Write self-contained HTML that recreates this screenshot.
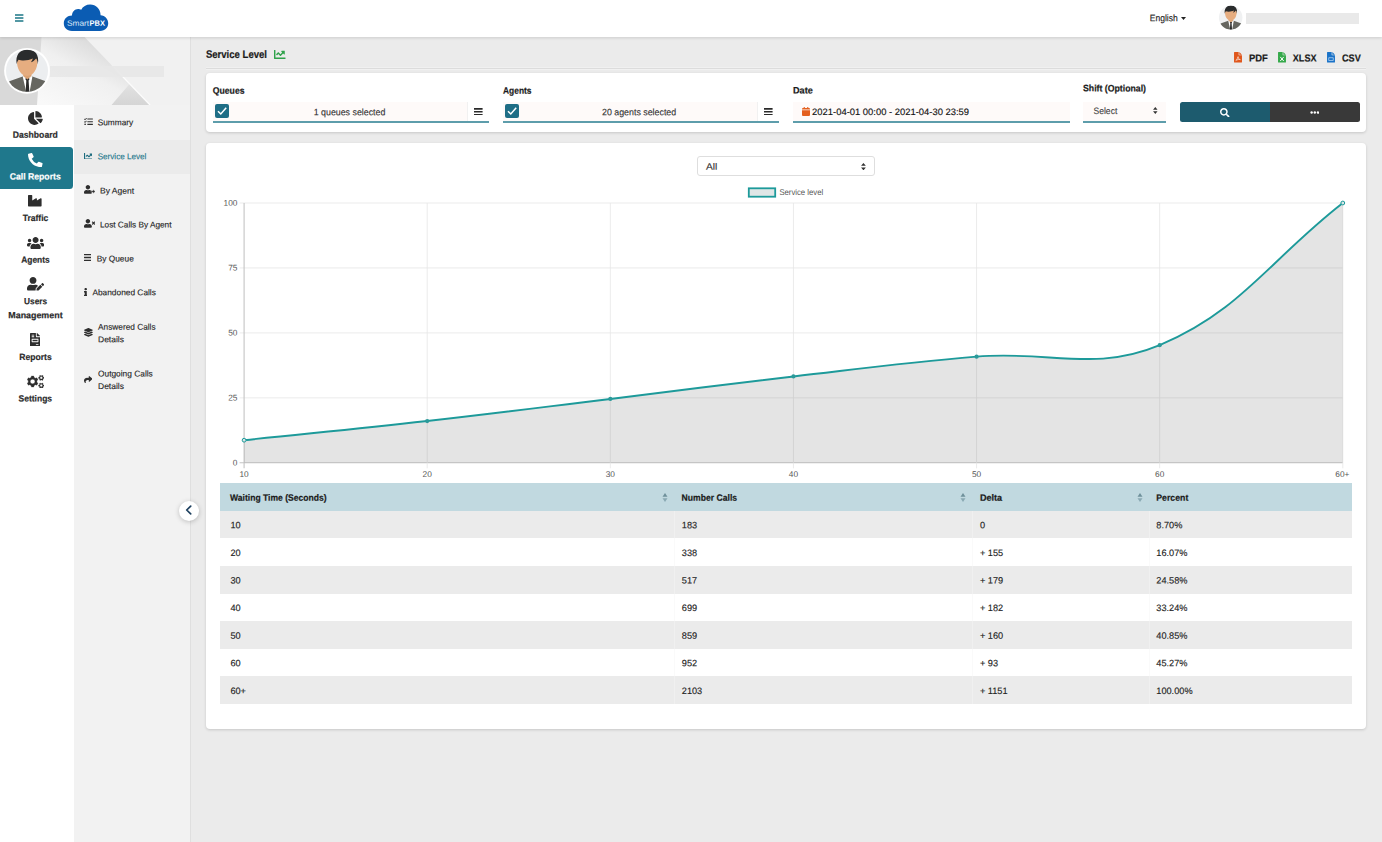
<!DOCTYPE html>
<html lang="en">
<head>
<meta charset="utf-8">
<title>SmartPBX - Service Level</title>
<style>
*{box-sizing:border-box;margin:0;padding:0}
html,body{width:1382px;height:842px;overflow:hidden}
body{font-family:"Liberation Sans",sans-serif;color:#222;background:#ebebeb;position:relative;font-size:9px}
.abs{position:absolute}
.t{position:absolute;white-space:nowrap;line-height:1;transform-origin:0 0;-webkit-text-stroke:.13px}
.t.b{-webkit-text-stroke:.2px}
.b{font-weight:bold}
#header{position:absolute;left:0;top:0;width:1382px;height:37px;background:#fff;box-shadow:0 1px 3px rgba(0,0,0,.13);z-index:5}
#nav1{position:absolute;left:0;top:37px;width:73.6px;height:805px;background:#fff}
#nav2{position:absolute;left:73.6px;top:37px;width:116.4px;height:805px;background:#f2f2f2}
#nav2b{position:absolute;left:189.8px;top:37px;width:1.6px;height:805px;background:#dfdfdf;z-index:3}
#banner{position:absolute;left:0;top:37px;width:190px;height:68px;overflow:hidden;background:#f1f1f1;z-index:2}
.card{position:absolute;background:#fff;border-radius:4px;box-shadow:0 1px 3px rgba(0,0,0,.16)}
</style>
</head>
<body>

<!-- HEADER -->
<div id="header">
  <svg class="abs" style="left:15px;top:14px" width="9" height="8" viewBox="0 0 9 8"><rect x="0" y="0.2" width="8.4" height="1.6" fill="#2a7f8e"/><rect x="0" y="3.2" width="8.4" height="1.6" fill="#2a7f8e"/><rect x="0" y="6.2" width="8.4" height="1.6" fill="#2a7f8e"/></svg>
  <!-- logo -->
  <svg class="abs" style="left:63px;top:3px" width="46" height="29" viewBox="0 0 46 29">
    <path d="M9 27.9 C3.5 27.9 0.8 24.4 0.8 20.3 C0.8 15.6 4.4 12.4 9 12.4 C9 8.6 12 5.7 15.4 5.9 C16.4 5.9 17.4 6.2 18.2 6.8 C19.8 3.6 23.2 1.6 27.2 1.6 C33 1.6 37.4 6 37.6 12.2 C42 12.6 45.2 16 45.2 20.3 C45.2 24.4 42.4 27.9 37 27.9 Z" fill="#0b5cb3"/>
    <text transform="translate(3.9 22.8) rotate(0.04)" font-family="Liberation Sans, sans-serif" font-size="7.7" fill="#dfeaf8" textLength="22.3" lengthAdjust="spacingAndGlyphs">Smart</text>
    <text transform="translate(26.5 22.8) rotate(0.04)" font-family="Liberation Sans, sans-serif" font-size="7.7" font-weight="bold" fill="#fff" textLength="15.4" lengthAdjust="spacingAndGlyphs">PBX</text>
  </svg>
  <div class="t" id="t-eng" style="left:1149px;top:13px;font-size:9.6px;color:#222;transform:translate(0.70px,0.24px) scaleX(0.8929) rotate(.04deg)">English</div>
  <svg class="abs" style="left:1181px;top:16.5px" width="5" height="3" viewBox="0 0 5 3"><path d="M0 0h5L2.5 3z" fill="#222"/></svg>
  <!-- small avatar -->
  <svg class="abs" style="left:1217.3px;top:4.1px" width="27.4" height="27.4" viewBox="0 0 48 48">
    <defs><clipPath id="c1"><circle cx="24" cy="23.8" r="21"/></clipPath></defs>
    <circle cx="24" cy="23.8" r="20.6" fill="#f0f1f2"/>
    <g clip-path="url(#c1)">
      <path d="M6.3 34.3 L19.7 29.4 L24.2 33 L29.4 29.4 L42.8 34.3 C44 38 42 44 24 46 C6 44 4.5 38 6.3 34.3 Z" fill="#666660"/>
      <path d="M19.7 29.4 L23.2 45 H26.6 L29.4 29.4 L24.4 31.5 Z" fill="#fff"/>
      <path d="M22.7 31 H26.1 L26.4 32.6 L25.6 33.6 L26.4 45.5 H22.6 L23.3 33.6 L22.5 32.6 Z" fill="#2b2b2b"/>
      <path d="M20.2 24 H28.4 V29 L24.4 32.6 L20.2 29 Z" fill="#dba273"/>
      <path d="M13.9 10 V13 C13.6 22 18 28.9 24.2 28.9 C30.4 28.9 34.8 22 34.5 13 V10 Z" fill="#e6ad80"/>
      <path d="M13.7 17.2 C12.2 8 16.8 2.6 24.5 2.6 C32.2 2.6 36.4 8 34.9 17.2 C34.6 14.6 34.1 12.6 33.2 11.4 C31.4 13.4 29.8 14.6 28 15.2 C29 13.8 29.5 12.8 29.8 11.6 C26 13.6 19 14 15.6 12.8 C14.5 14 14.1 15.2 13.7 17.2 Z" fill="#2a2c2d"/>
    </g>
  </svg>
  <div class="abs" style="left:1246px;top:13px;width:113px;height:11px;background:#e9e9e9"></div>
</div>

<!-- LEFT NAV -->
<div id="nav1"></div>
<div id="nav2"></div>
<div id="nav2b"></div>
<div id="banner">
  <div class="abs" style="left:0;top:0;width:190px;height:68px;background:#f1f1f1"></div>
  <svg class="abs" style="left:0;top:0" width="190" height="68" viewBox="0 0 190 68">
    <defs>
      <linearGradient id="g1" gradientUnits="userSpaceOnUse" x1="60" y1="75" x2="100" y2="0"><stop offset="0" stop-color="#f9f9f9"/><stop offset=".55" stop-color="#f0f0f0"/><stop offset=".95" stop-color="#d9d9d9"/></linearGradient>
      <linearGradient id="g2" x1="0" y1="0" x2="0" y2="1"><stop offset="0" stop-color="#e2e2e2"/><stop offset="1" stop-color="#d5d5d5"/></linearGradient>
      <linearGradient id="g3" gradientUnits="userSpaceOnUse" x1="110" y1="27" x2="150" y2="68"><stop offset="0" stop-color="#fff" stop-opacity="0"/><stop offset=".35" stop-color="#fff" stop-opacity=".9"/><stop offset="1" stop-color="#fff" stop-opacity=".9"/></linearGradient>
    </defs>
    <path d="M38 0 H84.5 L150 68 H36 Z" fill="url(#g1)"/>
    <path d="M0 0 H41.5 L37 68 H0 Z" fill="#d9d9d9"/>
    <path d="M111.5 68 L129.8 46.8 L150 68 Z" fill="url(#g2)"/>
    <path d="M108 24.4 L150 68" stroke="url(#g3)" stroke-width="1.3" fill="none"/>
  </svg>
  <div class="abs" style="left:50px;top:29px;width:114px;height:11px;background:#e8e8e8;opacity:.9;filter:blur(.5px)"></div>
  <!-- big avatar -->
  <svg class="abs" style="left:3px;top:10px" width="48" height="48" viewBox="0 0 48 48">
    <defs><clipPath id="c2"><circle cx="24" cy="23.8" r="21"/></clipPath></defs>
    <circle cx="24" cy="23.8" r="22.9" fill="#fff"/>
    <circle cx="24" cy="23.8" r="21" fill="#eceef0"/>
    <g clip-path="url(#c2)">
      <path d="M6.3 34.3 L19.7 29.4 L24.2 33 L29.4 29.4 L42.8 34.3 C44 38 42 44 24 46 C6 44 4.5 38 6.3 34.3 Z" fill="#666660"/>
      <path d="M19.7 29.4 L23.2 45 H26.6 L29.4 29.4 L24.4 31.5 Z" fill="#fff"/>
      <path d="M22.7 31 H26.1 L26.4 32.6 L25.6 33.6 L26.4 45.5 H22.6 L23.3 33.6 L22.5 32.6 Z" fill="#2b2b2b"/>
      <path d="M20.2 24 H28.4 V29 L24.4 32.6 L20.2 29 Z" fill="#dba273"/>
      <path d="M13.9 10 V13 C13.6 22 18 28.9 24.2 28.9 C30.4 28.9 34.8 22 34.5 13 V10 Z" fill="#e6ad80"/>
      <path d="M13.7 17.2 C12.2 8 16.8 2.6 24.5 2.6 C32.2 2.6 36.4 8 34.9 17.2 C34.6 14.6 34.1 12.6 33.2 11.4 C31.4 13.4 29.8 14.6 28 15.2 C29 13.8 29.5 12.8 29.8 11.6 C26 13.6 19 14 15.6 12.8 C14.5 14 14.1 15.2 13.7 17.2 Z" fill="#2a2c2d"/>
    </g>
  </svg>
</div>

<!-- primary nav items -->
<div class="abs" style="left:0;top:146.8px;width:73.4px;height:41.8px;background:#1f788c;border-radius:0 3.5px 3.5px 0;z-index:3"></div>
<div id="nav1items" style="position:absolute;left:0;top:0;z-index:4">
  <svg class="abs" style="left:28px;top:110.9px" width="14.8" height="13.9" viewBox="0 0 544 512" preserveAspectRatio="none"><path fill="#2e2e2e" d="M527.79 288H290.5l158.03 158.03c6.04 6.04 15.98 6.53 22.19.68 38.7-36.46 65.32-85.61 73.13-140.86 1.34-9.46-6.51-17.85-16.06-17.85zm-15.83-64.8C503.72 103.74 408.26 8.28 288.8.04 279.68-.59 272 7.1 272 16.24V240h223.77c9.14 0 16.82-7.68 16.19-16.8zM224 288V50.71c0-9.55-8.39-17.4-17.84-16.06C86.99 51.49-4.1 155.6.14 280.37 4.5 408.51 114.83 513.59 243.03 511.98c50.4-.63 96.97-16.87 135.26-44.03 7.9-5.6 8.42-17.23 1.57-24.08L224 288z"/></svg>
  <svg class="abs" style="left:28px;top:152.6px" width="14.6" height="14.2" viewBox="0 0 512 512" preserveAspectRatio="none"><path fill="#fff" d="M497.39 361.8l-112-48a24 24 0 0 0-28 6.9l-49.6 60.6A370.66 370.66 0 0 1 130.6 204.11l60.6-49.6a23.94 23.94 0 0 0 6.9-28l-48-112A24.16 24.16 0 0 0 122.6.61l-104 24A24 24 0 0 0 0 48c0 256.5 207.9 464 464 464a24 24 0 0 0 23.4-18.6l24-104a24.29 24.29 0 0 0-14.01-27.6z"/></svg>
  <svg class="abs" style="left:28.3px;top:195.3px" width="13.6" height="11.4" viewBox="0 32 512 448" preserveAspectRatio="none"><path fill="#2e2e2e" d="M475.115 163.781L336 252.309v-68.28c0-18.916-20.931-30.399-36.885-20.248L160 252.309V56c0-13.255-10.745-24-24-24H24C10.745 32 0 42.745 0 56v400c0 13.255 10.745 24 24 24h464c13.255 0 24-10.745 24-24V184.029c0-18.917-20.931-30.399-36.885-20.248z"/></svg>
  <svg class="abs" style="left:26.7px;top:236.7px" width="17.2" height="12" viewBox="0 32 640 448" preserveAspectRatio="none"><path fill="#2e2e2e" d="M96 224c35.3 0 64-28.7 64-64s-28.7-64-64-64-64 28.7-64 64 28.7 64 64 64zm448 0c35.3 0 64-28.7 64-64s-28.7-64-64-64-64 28.7-64 64 28.7 64 64 64zm32 32h-64c-17.6 0-33.5 7.1-45.1 18.6 40.3 22.1 68.9 62 75.1 109.4h66c17.7 0 32-14.3 32-32v-32c0-35.3-28.7-64-64-64zm-256 0c61.9 0 112-50.1 112-112S381.9 32 320 32 208 82.1 208 144s50.1 112 112 112zm76.8 32h-8.3c-20.8 10-43.9 16-68.5 16s-47.6-6-68.5-16h-8.3C179.6 288 128 339.6 128 403.2V432c0 26.5 21.5 48 48 48h288c26.5 0 48-21.5 48-48v-28.8c0-63.6-51.6-115.2-115.2-115.2zm-223.7-13.4C161.5 263.1 145.6 256 128 256H64c-35.3 0-64 28.7-64 64v32c0 17.7 14.3 32 32 32h65.9c6.3-47.4 34.9-87.3 75.2-109.4z"/></svg>
  <svg class="abs" style="left:26.7px;top:277.3px" width="17.2" height="13.6" viewBox="0 0 640 512" preserveAspectRatio="none"><path fill="#2e2e2e" d="M224 256c70.7 0 128-57.3 128-128S294.7 0 224 0 96 57.3 96 128s57.3 128 128 128zm89.6 32h-16.7c-22.2 10.2-46.9 16-72.9 16s-50.6-5.8-72.9-16h-16.7C60.2 288 0 348.2 0 422.4V464c0 26.5 21.5 48 48 48h274.9c-2.4-6.8-3.4-14-2.6-21.3l6.8-60.9 1.2-11.1 7.9-7.9 77.3-77.3c-24.5-27.7-60-45.5-99.9-45.5zm45.3 145.3l-6.8 61c-1.1 10.2 7.5 18.8 17.6 17.6l60.9-6.8 137.9-137.9-71.7-71.7-137.9 137.8zM633 268.9L595.1 231c-9.3-9.3-24.5-9.3-33.8 0l-37.8 37.8-4.1 4.1 71.8 71.7 41.8-41.8c9.3-9.4 9.3-24.5 0-33.9z"/></svg>
  <svg class="abs" style="left:30.3px;top:333.1px" width="10.1" height="13.4" viewBox="0 0 384 512" preserveAspectRatio="none"><path fill="#2e2e2e" d="M288 256H96v64h192v-64zm89-151L279.1 7c-4.5-4.5-10.6-7-17-7H256v128h128v-6.1c0-6.3-2.5-12.4-7-16.9zm-153 31V0H24C10.7 0 0 10.7 0 24v464c0 13.3 10.7 24 24 24h336c13.3 0 24-10.7 24-24V160H248c-13.2 0-24-10.8-24-24zM64 72c0-4.42 3.58-8 8-8h80c4.42 0 8 3.58 8 8v16c0 4.42-3.58 8-8 8H72c-4.42 0-8-3.58-8-8V72zm0 64c0-4.42 3.58-8 8-8h80c4.42 0 8 3.58 8 8v16c0 4.42-3.58 8-8 8H72c-4.42 0-8-3.58-8-8v-16zm256 304c0 4.42-3.58 8-8 8h-80c-4.42 0-8-3.58-8-8v-16c0-4.42 3.58-8 8-8h80c4.42 0 8 3.58 8 8v16zm0-200v96c0 8.84-7.16 16-16 16H80c-8.84 0-16-7.16-16-16v-96c0-8.84 7.16-16 16-16h224c8.84 0 16 7.16 16 16z"/></svg>
  <svg class="abs" style="left:26.7px;top:374.7px" width="17.2" height="13.4" viewBox="0 0 34.4 26.8"><g fill="#2e2e2e" fill-rule="evenodd" stroke="#2e2e2e" stroke-width="0.5" stroke-linejoin="round"><path d="M8.39 4.66 L8.83 1.85 L13.57 1.85 L14.01 4.66 L17.02 6.40 L19.67 5.37 L22.04 9.48 L19.83 11.26 L19.83 14.74 L22.04 16.52 L19.67 20.63 L17.02 19.60 L14.01 21.34 L13.57 24.15 L8.83 24.15 L8.39 21.34 L5.38 19.60 L2.73 20.63 L0.36 16.52 L2.57 14.74 L2.57 11.26 L0.36 9.48 L2.73 5.37 L5.38 6.40 Z M6.50 13.00 a4.70 4.70 0 1 0 9.40 0 a4.70 4.70 0 1 0 -9.40 0 Z"/><path d="M29.45 1.38 L30.33 0.27 L32.35 1.44 L31.83 2.76 L32.68 4.23 L34.08 4.44 L34.08 6.76 L32.68 6.97 L31.83 8.44 L32.35 9.76 L30.33 10.93 L29.45 9.82 L27.75 9.82 L26.87 10.93 L24.85 9.76 L25.37 8.44 L24.52 6.97 L23.12 6.76 L23.12 4.44 L24.52 4.23 L25.37 2.76 L24.85 1.44 L26.87 0.27 L27.75 1.38 Z M26.10 5.60 a2.50 2.50 0 1 0 5.00 0 a2.50 2.50 0 1 0 -5.00 0 Z"/><path d="M29.45 16.98 L30.33 15.87 L32.35 17.04 L31.83 18.36 L32.68 19.83 L34.08 20.04 L34.08 22.36 L32.68 22.57 L31.83 24.04 L32.35 25.36 L30.33 26.53 L29.45 25.42 L27.75 25.42 L26.87 26.53 L24.85 25.36 L25.37 24.04 L24.52 22.57 L23.12 22.36 L23.12 20.04 L24.52 19.83 L25.37 18.36 L24.85 17.04 L26.87 15.87 L27.75 16.98 Z M26.10 21.20 a2.50 2.50 0 1 0 5.00 0 a2.50 2.50 0 1 0 -5.00 0 Z"/></g></svg>
  <div class="t b" id="n-dash" style="left:12px;top:130px;font-size:9px;color:#2b2b2b;transform:translate(0.80px,0.82px) scaleX(0.9571) rotate(.04deg)">Dashboard</div>
  <div class="t b" id="n-call" style="left:9px;top:172px;font-size:9px;color:#fff;transform:translate(0.80px,0.42px) scaleX(0.9601) rotate(.04deg)">Call Reports</div>
  <div class="t b" id="n-traf" style="left:22px;top:213px;font-size:9px;color:#2b2b2b;transform:translate(0.70px,0.92px) scaleX(0.9476) rotate(.04deg)">Traffic</div>
  <div class="t b" id="n-agen" style="left:21px;top:255px;font-size:9px;color:#2b2b2b;transform:translate(0.20px,0.72px) scaleX(0.9339) rotate(.04deg)">Agents</div>
  <div class="t b" id="n-user" style="left:24px;top:297px;font-size:9px;color:#2b2b2b;transform:translate(0.10px,0.32px) scaleX(0.9189) rotate(.04deg)">Users</div>
  <div class="t b" id="n-mana" style="left:8px;top:311px;font-size:9px;color:#2b2b2b;transform:translate(0.30px,0.22px) scaleX(0.9870) rotate(.04deg)">Management</div>
  <div class="t b" id="n-repo" style="left:19px;top:352px;font-size:9px;color:#2b2b2b;transform:translate(0.30px,0.92px) scaleX(0.9525) rotate(.04deg)">Reports</div>
  <div class="t b" id="n-sett" style="left:18px;top:394px;font-size:9px;color:#2b2b2b;transform:translate(0.50px,0.42px) scaleX(0.9461) rotate(.04deg)">Settings</div>
</div>

<!-- secondary nav -->
<div class="abs" style="left:73.6px;top:140px;width:116.4px;height:33.8px;background:#ebebeb;z-index:3"></div>
<div id="nav2items" style="position:absolute;left:0;top:0;z-index:4">
  <!-- Summary -->
  <svg class="abs" style="left:83.9px;top:118.2px" width="8.9" height="7.2" viewBox="0 30 512 436" preserveAspectRatio="none"><path fill="#2e2e2e" d="M139.61 35.5a12 12 0 0 0-17 0L58.93 98.81l-22.7-22.12a12 12 0 0 0-17 0L3.53 92.41a12 12 0 0 0 0 17l47.59 47.4a12.78 12.78 0 0 0 17.61 0l15.59-15.62L156.52 69a12.09 12.09 0 0 0 .09-17zm0 159.19a12 12 0 0 0-17 0l-63.68 63.72-22.7-22.1a12 12 0 0 0-17 0L3.53 252a12 12 0 0 0 0 17L51 316.5a12.77 12.77 0 0 0 17.6 0l15.7-15.69 72.2-72.22a12 12 0 0 0 .09-16.9zM64 368c-26.49 0-48.59 21.5-48.59 48S37.53 464 64 464a48 48 0 0 0 0-96zm432 16H208a16 16 0 0 0-16 16v32a16 16 0 0 0 16 16h288a16 16 0 0 0 16-16v-32a16 16 0 0 0-16-16zm0-320H208a16 16 0 0 0-16 16v32a16 16 0 0 0 16 16h288a16 16 0 0 0 16-16V80a16 16 0 0 0-16-16zm0 160H208a16 16 0 0 0-16 16v32a16 16 0 0 0 16 16h288a16 16 0 0 0 16-16v-32a16 16 0 0 0-16-16z"/></svg>
  <div class="t" id="s1" style="left:97px;top:118px;font-size:8.4px;color:#262626;transform:translate(0.70px,0.31px) scaleX(0.9932) rotate(.04deg)">Summary</div>
  <!-- Service level -->
  <svg class="abs" style="left:83.6px;top:152.8px" width="8.8" height="6.5" viewBox="0 64 512 384" preserveAspectRatio="none"><path fill="#1b6a7d" d="M496 384H64V80c0-8.84-7.16-16-16-16H16C7.16 64 0 71.16 0 80v336c0 17.67 14.33 32 32 32h464c8.84 0 16-7.16 16-16v-32c0-8.84-7.16-16-16-16zM464 96H345.94c-21.38 0-32.09 25.85-16.97 40.97l32.4 32.4L288 242.75l-73.37-73.37c-12.5-12.5-32.76-12.5-45.25 0l-68.69 68.69c-6.25 6.25-6.25 16.38 0 22.63l22.62 22.62c6.25 6.25 16.38 6.25 22.63 0L192 237.25l73.37 73.37c12.5 12.5 32.76 12.5 45.25 0l96-96 32.4 32.4c15.12 15.12 40.97 4.41 40.97-16.97V112c.01-8.84-7.15-16-15.99-16z"/></svg>
  <div class="t" id="s2" style="left:97px;top:152px;font-size:8.4px;color:#1f788c;transform:translate(0.70px,0.31px) scaleX(0.9686) rotate(.04deg)">Service Level</div>
  <!-- By agent -->
  <svg class="abs" style="left:83.5px;top:185.4px" width="11.2" height="8.8" viewBox="0 0 640 512" preserveAspectRatio="none"><path fill="#2e2e2e" d="M224 256c70.7 0 128-57.3 128-128S294.7 0 224 0 96 57.3 96 128s57.300 128 128 128zm89.6 32h-16.700c-22.200 10.200-46.900 16-72.900 16s-50.600-5.800-72.900-16h-16.700C60.200 288 0 348.200 0 422.400V464c0 26.500 21.500 48 48 48h352c26.500 0 48-21.500 48-48v-41.600c0-74.200-60.200-134.400-134.400-134.400z"/><path fill="#2e2e2e" stroke="#f2f2f2" stroke-width="16" d="M404 336h116v-76l120 118-120 118v-76H404z"/></svg>
  <div class="t" id="s3" style="left:100px;top:186px;font-size:8.4px;color:#262626;transform:translate(0.00px,0.61px) scaleX(1.0140) rotate(.04deg)">By Agent</div>
  <!-- Lost calls by agent -->
  <svg class="abs" style="left:83.5px;top:219.4px" width="11.2" height="8.8" viewBox="0 0 640 512" preserveAspectRatio="none"><path fill="#2e2e2e" d="M589.6 240l45.6-45.6c6.3-6.3 6.3-16.5 0-22.8l-22.800-22.800c-6.300-6.300-16.500-6.300-22.800 0L544 194.4l-45.6-45.6c-6.3-6.3-16.5-6.3-22.8 0l-22.8 22.8c-6.3 6.3-6.3 16.5 0 22.8l45.6 45.6-45.6 45.6c-6.3 6.3-6.3 16.5 0 22.8l22.8 22.8c6.3 6.3 16.5 6.3 22.8 0l45.6-45.6 45.6 45.6c6.3 6.3 16.5 6.3 22.8 0l22.8-22.8c6.3-6.3 6.3-16.5 0-22.8L589.6 240zM224 256c70.7 0 128-57.3 128-128S294.7 0 224 0 96 57.3 96 128s57.3 128 128 128zm89.6 32h-16.7c-22.2 10.2-46.9 16-72.9 16s-50.6-5.800-72.9-16h-16.700C60.2 288 0 348.2 0 422.4V464c0 26.5 21.5 48 48 48h352c26.5 0 48-21.5 48-48v-41.600c0-74.200-60.200-134.400-134.400-134.400z"/></svg>
  <div class="t" id="s4" style="left:100px;top:220px;font-size:8.4px;color:#262626;transform:translate(0.00px,0.51px) scaleX(0.9845) rotate(.04deg)">Lost Calls By Agent</div>
  <!-- By queue -->
  <svg class="abs" style="left:83.7px;top:254.4px" width="7.6" height="7" viewBox="0 60 448 392" preserveAspectRatio="none"><path fill="#2e2e2e" d="M16 132h416c8.837 0 16-7.163 16-16V76c0-8.837-7.163-16-16-16H16C7.163 60 0 67.163 0 76v40c0 8.837 7.163 16 16 16zm0 160h416c8.837 0 16-7.163 16-16v-40c0-8.837-7.163-16-16-16H16c-8.837 0-16 7.163-16 16v40c0 8.837 7.163 16 16 16zm0 160h416c8.837 0 16-7.163 16-16v-40c0-8.837-7.163-16-16-16H16c-8.837 0-16 7.163-16 16v40c0 8.837 7.163 16 16 16z"/></svg>
  <div class="t" id="s5" style="left:96px;top:254px;font-size:8.4px;color:#262626;transform:translate(0.70px,0.51px) scaleX(0.9960) rotate(.04deg)">By Queue</div>
  <!-- Abandoned -->
  <svg class="abs" style="left:83.7px;top:287.8px" width="3.5" height="8.3" viewBox="0 0 192 512" preserveAspectRatio="none"><path fill="#2e2e2e" d="M20 424.229h20V279.771H20c-11.046 0-20-8.954-20-20V212c0-11.046 8.954-20 20-20h112c11.046 0 20 8.954 20 20v212.229h20c11.046 0 20 8.954 20 20V492c0 11.046-8.954 20-20 20H20c-11.046 0-20-8.954-20-20v-47.771c0-11.046 8.954-20 20-20zM96 0C56.235 0 24 32.235 24 72s32.235 72 72 72 72-32.235 72-72S135.764 0 96 0z"/></svg>
  <div class="t" id="s6" style="left:92px;top:288px;font-size:8.4px;color:#262626;transform:translate(0.40px,0.31px) scaleX(0.9953) rotate(.04deg)">Abandoned Calls</div>
  <!-- Answered -->
  <svg class="abs" style="left:83.8px;top:328.4px" width="8.8" height="8.8" viewBox="0 0 512 512" preserveAspectRatio="none"><path fill="#2e2e2e" d="M12.41 148.02l232.94 105.67c6.8 3.09 14.49 3.09 21.29 0l232.94-105.67c16.55-7.51 16.55-32.52 0-40.03L266.65 2.31a25.607 25.607 0 0 0-21.29 0L12.41 107.98c-16.55 7.51-16.55 32.53 0 40.04zm487.18 88.28l-58.09-26.33-161.64 73.27c-7.56 3.43-15.59 5.17-23.86 5.17s-16.29-1.74-23.86-5.17L70.51 209.97l-58.1 26.33c-16.55 7.5-16.55 32.5 0 40l232.94 105.59c6.8 3.08 14.49 3.08 21.29 0L499.59 276.3c16.55-7.5 16.55-32.5 0-40zm0 127.8l-57.87-26.23-161.86 73.37c-7.56 3.43-15.59 5.17-23.86 5.17s-16.29-1.74-23.86-5.17L70.29 337.87 12.41 364.1c-16.55 7.5-16.55 32.5 0 40l232.94 105.59c6.8 3.08 14.49 3.08 21.29 0L499.59 404.1c16.55-7.5 16.55-32.5 0-40z"/></svg>
  <div class="t" id="s7" style="left:98px;top:322px;font-size:8.4px;color:#262626;transform:translate(0.00px,0.81px) scaleX(0.9899) rotate(.04deg)">Answered Calls</div>
  <div class="t" id="s8" style="left:98px;top:335px;font-size:8.4px;color:#262626;transform:translate(0.00px,0.21px) scaleX(1.0153) rotate(.04deg)">Details</div>
  <!-- Outgoing -->
  <svg class="abs" style="left:83.7px;top:375.7px" width="8.5" height="7.4" viewBox="0 30 512 452" preserveAspectRatio="none"><path fill="#2e2e2e" d="M503.691 189.836L327.687 37.851C312.281 24.546 288 35.347 288 56.015v80.053C127.371 137.907 0 170.1 0 322.326c0 61.441 39.581 122.309 83.333 154.132 13.653 9.931 33.111-2.533 28.077-18.631C66.066 312.814 132.917 274.316 288 272.085V360c0 20.7 24.3 31.453 39.687 18.164l176.004-152c11.071-9.562 11.086-26.753 0-36.328z"/></svg>
  <div class="t" id="s9" style="left:98px;top:369px;font-size:8.4px;color:#262626;transform:translate(0.00px,0.41px) scaleX(0.9975) rotate(.04deg)">Outgoing Calls</div>
  <div class="t" id="s10" style="left:98px;top:381px;font-size:8.4px;color:#262626;transform:translate(0.00px,0.91px) scaleX(1.0153) rotate(.04deg)">Details</div>
  <!-- collapse toggle -->
  <div class="abs" style="left:179px;top:500.6px;width:20px;height:20px;border-radius:50%;background:#fff;box-shadow:0 1px 5px rgba(0,0,0,.22)"></div>
  <svg class="abs" style="left:185.2px;top:505.4px" width="7" height="10" viewBox="0 0 7 10"><path d="M5.7 1.2 L1.7 5 L5.7 8.8" stroke="#1c3f5e" stroke-width="1.7" fill="none" stroke-linecap="round" stroke-linejoin="round"/></svg>
</div>

<!-- MAIN -->
<div id="main" style="position:absolute;left:0;top:0;z-index:1">
  <div class="t b" id="m-title" style="left:205px;top:48px;font-size:10.8px;color:#1a1a1a;transform:translate(0.90px,0.87px) scaleX(0.8851) rotate(.04deg)">Service Level</div>
  <svg class="abs" style="left:274.2px;top:49.9px" width="11.5" height="9.1" viewBox="0 64 512 384" preserveAspectRatio="none"><path fill="#2ea24a" d="M496 384H64V80c0-8.84-7.16-16-16-16H16C7.16 64 0 71.16 0 80v336c0 17.67 14.33 32 32 32h464c8.84 0 16-7.16 16-16v-32c0-8.84-7.16-16-16-16zM464 96H345.94c-21.38 0-32.09 25.85-16.97 40.97l32.4 32.4L288 242.75l-73.37-73.37c-12.5-12.5-32.76-12.5-45.25 0l-68.69 68.69c-6.25 6.25-6.25 16.38 0 22.63l22.62 22.62c6.25 6.25 16.38 6.25 22.63 0L192 237.25l73.37 73.37c12.5 12.5 32.76 12.5 45.25 0l96-96 32.4 32.4c15.12 15.12 40.97 4.41 40.97-16.97V112c.01-8.84-7.15-16-15.99-16z"/></svg>
  <div class="abs" style="left:206px;top:67px;width:1160px;height:1px;background:#f0f0f0"></div>
  <div class="abs" style="left:206px;top:68px;width:1160px;height:1px;background:#dcdcdc"></div>
  <div class="abs" style="left:206px;top:69px;width:1160px;height:1px;background:#f1f1f1"></div>

  <!-- export -->
  <svg class="abs" style="left:1233.6px;top:52.4px" width="8" height="10.6" viewBox="0 0 12 16"><path d="M0.8 0 H7 V4.2 C7 4.7 7.3 5 7.8 5 H12 V15.2 C12 15.7 11.7 16 11.2 16 H0.8 C0.3 16 0 15.7 0 15.2 V0.8 C0 0.3 0.3 0 0.8 0 Z M8 0 L12 4 H8 Z" fill="#e0561b"/><path d="M2.4 13 C4.2 12 5.2 10 5.6 7.6 C5.8 6.6 6.6 6.8 6.5 7.8 C6.3 9.6 7.4 11 9.6 11.6 M3.2 12.6 C5.4 11.4 7.6 11 9.4 11.4" stroke="#fff" stroke-width=".9" fill="none"/></svg>
  <div class="t b" id="e1" style="left:1248px;top:53px;font-size:10.2px;color:#1a1a1a;transform:translate(0.90px,0.50px) scaleX(0.9227) rotate(.04deg)">PDF</div>
  <svg class="abs" style="left:1277.8px;top:52.4px" width="8" height="10.6" viewBox="0 0 12 16"><path d="M0.8 0 H7 V4.2 C7 4.7 7.3 5 7.8 5 H12 V15.2 C12 15.7 11.7 16 11.2 16 H0.8 C0.3 16 0 15.7 0 15.2 V0.8 C0 0.3 0.3 0 0.8 0 Z M8 0 L12 4 H8 Z" fill="#35a94a"/><path d="M3.4 7.4 L8.6 13.6 M8.6 7.4 L3.4 13.6" stroke="#fff" stroke-width="1.5" fill="none"/></svg>
  <div class="t b" id="e2" style="left:1292px;top:53px;font-size:10.2px;color:#1a1a1a;transform:translate(0.80px,0.50px) scaleX(0.8907) rotate(.04deg)">XLSX</div>
  <svg class="abs" style="left:1326.8px;top:52.4px" width="8" height="10.6" viewBox="0 0 12 16"><path d="M0.8 0 H7 V4.2 C7 4.7 7.3 5 7.8 5 H12 V15.2 C12 15.7 11.7 16 11.2 16 H0.8 C0.3 16 0 15.7 0 15.2 V0.8 C0 0.3 0.3 0 0.8 0 Z M8 0 L12 4 H8 Z" fill="#1a73c8"/><path d="M2.6 8.6 H9.4 V12.8 H2.6 Z" stroke="#cfe3f7" stroke-width="1" fill="none"/></svg>
  <div class="t b" id="e3" style="left:1342px;top:53px;font-size:10.2px;color:#1a1a1a;transform:translate(0.00px,0.50px) scaleX(0.8925) rotate(.04deg)">CSV</div>

  <!-- filter card -->
  <div class="card" style="left:206px;top:72.6px;width:1160px;height:59.8px"></div>
  <div class="t b" id="f1" style="left:212px;top:85px;font-size:9.4px;color:#1a1a1a;transform:translate(0.80px,0.77px) scaleX(0.9218) rotate(.04deg)">Queues</div>
  <div class="abs" style="left:213px;top:101.5px;width:276px;height:20px;background:#fefaf9"></div>
  <div class="abs" style="left:213px;top:121.2px;width:276px;height:1.5px;background:#5d9dab"></div>
  <div class="abs" style="left:467px;top:101.5px;width:22px;height:19.7px;background:#fff;border-left:1px solid #f1f1f1"></div>
  <svg class="abs" style="left:215px;top:104px" width="14" height="14" viewBox="0 0 14 14"><rect width="14" height="14" rx="2" fill="#1f6e86"/><path d="M3 7.2 L5.8 10 L11.2 3.8" stroke="#fff" stroke-width="1.5" fill="none"/></svg>
  <div class="t" id="f2" style="left:313px;top:108px;font-size:9.2px;color:#333;transform:translate(0.70px,0.29px) scaleX(0.9614) rotate(.04deg)">1 queues selected</div>
  <svg class="abs" style="left:474px;top:107.6px" width="8.6" height="7.6" viewBox="0 0 16 14"><path d="M0 1.5 H16 M0 7 H16 M0 12.5 H16" stroke="#2a2a2a" stroke-width="3" fill="none"/></svg>

  <div class="t b" id="f3" style="left:503px;top:85px;font-size:9.4px;color:#1a1a1a;transform:translate(0.00px,0.77px) scaleX(0.8968) rotate(.04deg)">Agents</div>
  <div class="abs" style="left:503px;top:101.5px;width:276px;height:20px;background:#fefaf9"></div>
  <div class="abs" style="left:503px;top:121.2px;width:276px;height:1.5px;background:#5d9dab"></div>
  <div class="abs" style="left:757px;top:101.5px;width:22px;height:19.7px;background:#fff;border-left:1px solid #f1f1f1"></div>
  <svg class="abs" style="left:505px;top:104px" width="14" height="14" viewBox="0 0 14 14"><rect width="14" height="14" rx="2" fill="#1f6e86"/><path d="M3 7.2 L5.8 10 L11.2 3.8" stroke="#fff" stroke-width="1.5" fill="none"/></svg>
  <div class="t" id="f4" style="left:602px;top:108px;font-size:9.2px;color:#333;transform:translate(0.00px,0.19px) scaleX(0.9619) rotate(.04deg)">20 agents selected</div>
  <svg class="abs" style="left:764px;top:107.6px" width="8.6" height="7.6" viewBox="0 0 16 14"><path d="M0 1.5 H16 M0 7 H16 M0 12.5 H16" stroke="#2a2a2a" stroke-width="3" fill="none"/></svg>

  <div class="t b" id="f5" style="left:793px;top:85px;font-size:9.4px;color:#1a1a1a;transform:translate(0.00px,0.57px) scaleX(0.9740) rotate(.04deg)">Date</div>
  <div class="abs" style="left:793px;top:101.5px;width:276.5px;height:20px;background:#fefaf9"></div>
  <div class="abs" style="left:793px;top:121.2px;width:276.5px;height:1.5px;background:#5d9dab"></div>
  <svg class="abs" style="left:801.6px;top:106.6px" width="8" height="9" viewBox="0 0 16 18"><path d="M0 6.4 H16 V16.2 C16 17.2 15.2 18 14.2 18 H1.8 C0.8 18 0 17.2 0 16.2 Z M1.8 2.2 H3.4 V0.6 C3.4 0.2 3.6 0 4 0 H5 C5.4 0 5.6 0.2 5.6 0.6 V2.2 H10.4 V0.6 C10.4 0.2 10.6 0 11 0 H12 C12.4 0 12.6 0.2 12.6 0.6 V2.2 H14.2 C15.2 2.2 16 3 16 4 V5.2 H0 V4 C0 3 0.8 2.2 1.8 2.2 Z" fill="#e4601f"/></svg>
  <div class="t" id="f6" style="left:812px;top:107px;font-size:9.2px;color:#111;transform:translate(0.10px,0.89px) scaleX(1.0245) rotate(.04deg)">2021-04-01 00:00 - 2021-04-30 23:59</div>

  <div class="t b" id="f7" style="left:1083px;top:83px;font-size:9.4px;color:#1a1a1a;transform:translate(0.00px,0.37px) scaleX(0.9305) rotate(.04deg)">Shift (Optional)</div>
  <div class="abs" style="left:1083px;top:101.5px;width:83px;height:20px;background:#fefaf9"></div>
  <div class="abs" style="left:1083px;top:121.2px;width:83px;height:1.5px;background:#5d9dab"></div>
  <div class="t" id="f8" style="left:1093px;top:107px;font-size:9.2px;color:#444;transform:translate(0.50px,0.09px) scaleX(0.9316) rotate(.04deg)">Select</div>
  <svg class="abs" style="left:1153.4px;top:107.4px" width="4.6" height="7" viewBox="0 0 9 14"><path d="M4.5 0 L9 5.4 H0 Z M4.5 14 L9 8.6 H0 Z" fill="#333"/></svg>

  <div class="abs" style="left:1180px;top:102px;width:90px;height:20px;background:#1d5b6e;border-radius:2.5px 0 0 2.5px"></div>
  <div class="abs" style="left:1270px;top:102px;width:89.5px;height:20px;background:#393939;border-radius:0 2.5px 2.5px 0"></div>
  <svg class="abs" style="left:1220px;top:108px" width="9.5" height="9.4" viewBox="0 0 512 512" preserveAspectRatio="none"><path fill="#fff" d="M505 442.7L405.3 343c-4.5-4.5-10.6-7-17-7H372c27.6-35.3 44-79.700 44-128C416 93.1 322.9 0 208 0S0 93.1 0 208s93.1 208 208 208c48.3 0 92.7-16.4 128-44v16.3c0 6.4 2.5 12.5 7 17l99.7 99.7c9.4 9.4 24.6 9.4 33.9 0l28.3-28.300c9.400-9.400 9.400-24.600.1-34zM208 336c-70.7 0-128-57.200-128-128 0-70.700 57.200-128 128-128 70.700 0 128 57.200 128 128 0 70.700-57.200 128-128 128z"/></svg>
  <svg class="abs" style="left:1309.8px;top:110.6px" width="9.6" height="3.2" viewBox="0 0 18 6"><circle cx="3" cy="3" r="2.3" fill="#fff"/><circle cx="9" cy="3" r="2.3" fill="#fff"/><circle cx="15" cy="3" r="2.3" fill="#fff"/></svg>

  <!-- chart card -->
  <div class="card" style="left:206px;top:143px;width:1160px;height:585.5px"></div>
  <div id="chartwrap"><div class="abs" style="left:697px;top:156px;width:177.8px;height:20.4px;border:1px solid #dedede;border-radius:3px;background:#fff"></div>
<div class="t" id="c-all" style="left:706px;top:161px;font-size:9.4px;color:#333;transform:translate(0.00px,0.67px) scaleX(1.0939) rotate(.04deg)">All</div>
<svg class="abs" style="left:861.2px;top:162.8px" width="4.9" height="7.4" viewBox="0 0 9 14"><path d="M4.5 0 L9 5.4 H0 Z M4.5 14 L9 8.6 H0 Z" fill="#333"/></svg>
<svg class="abs" style="left:0;top:0" width="1382" height="500" viewBox="0 0 1382 500" font-family="Liberation Sans, sans-serif">
<g fill="none"><path d="M239.6 462.80 H1342.8" stroke="#c4c4c4" stroke-width="1.1"/><path d="M239.6 397.85 H1342.8" stroke="#e6e6e6" stroke-width="0.8"/><path d="M239.6 332.90 H1342.8" stroke="#e6e6e6" stroke-width="0.8"/><path d="M239.6 267.95 H1342.8" stroke="#e6e6e6" stroke-width="0.8"/><path d="M239.6 203.00 H1342.8" stroke="#e6e6e6" stroke-width="0.8"/><path d="M244.10 203.0 V468.3" stroke="#c4c4c4" stroke-width="1.1"/><path d="M427.22 203.0 V468.3" stroke="#e6e6e6" stroke-width="0.8"/><path d="M610.33 203.0 V468.3" stroke="#e6e6e6" stroke-width="0.8"/><path d="M793.45 203.0 V468.3" stroke="#e6e6e6" stroke-width="0.8"/><path d="M976.57 203.0 V468.3" stroke="#e6e6e6" stroke-width="0.8"/><path d="M1159.68 203.0 V468.3" stroke="#e6e6e6" stroke-width="0.8"/><path d="M1342.80 203.0 V468.3" stroke="#e6e6e6" stroke-width="0.8"/></g>
<path d="M244.10 440.20 C317.35 432.54 354.04 429.29 427.22 421.05 C500.53 412.79 537.10 407.86 610.33 398.94 C683.59 390.02 720.14 384.90 793.45 376.44 C866.63 368.00 903.18 362.93 976.57 356.67 C1049.67 350.43 1094.97 372.34 1159.68 345.19 C1241.46 310.88 1269.55 259.88 1342.80 203.00 L1342.80 462.80 L244.10 462.80 Z" fill="rgba(120,120,120,0.2)"/>
<path d="M244.10 440.20 C317.35 432.54 354.04 429.29 427.22 421.05 C500.53 412.79 537.10 407.86 610.33 398.94 C683.59 390.02 720.14 384.90 793.45 376.44 C866.63 368.00 903.18 362.93 976.57 356.67 C1049.67 350.43 1094.97 372.34 1159.68 345.19 C1241.46 310.88 1269.55 259.88 1342.80 203.00" fill="none" stroke="#1d9a9a" stroke-width="1.9"/>
<circle cx="244.10" cy="440.20" r="1.9" fill="#d8e6e6" stroke="#1d9a9a" stroke-width="1"/>
<circle cx="427.22" cy="421.05" r="2.1" fill="#2b9a9a"/>
<circle cx="610.33" cy="398.94" r="2.1" fill="#2b9a9a"/>
<circle cx="793.45" cy="376.44" r="2.1" fill="#2b9a9a"/>
<circle cx="976.57" cy="356.67" r="2.1" fill="#2b9a9a"/>
<circle cx="1159.68" cy="345.19" r="2.1" fill="#2b9a9a"/>
<circle cx="1342.80" cy="203.00" r="1.9" fill="#d8e6e6" stroke="#1d9a9a" stroke-width="1"/>
<text transform="translate(237.4 465.47) rotate(0.04)" text-anchor="end" font-size="8.3" fill="#555">0</text>
<text transform="translate(237.4 400.52) rotate(0.04)" text-anchor="end" font-size="8.3" fill="#555">25</text>
<text transform="translate(237.4 335.57) rotate(0.04)" text-anchor="end" font-size="8.3" fill="#555">50</text>
<text transform="translate(237.4 270.62) rotate(0.04)" text-anchor="end" font-size="8.3" fill="#555">75</text>
<text transform="translate(237.4 205.67) rotate(0.04)" text-anchor="end" font-size="8.3" fill="#555">100</text>
<text transform="translate(244.10 477.1) rotate(0.04)" text-anchor="middle" font-size="8.3" fill="#555">10</text>
<text transform="translate(427.22 477.1) rotate(0.04)" text-anchor="middle" font-size="8.3" fill="#555">20</text>
<text transform="translate(610.33 477.1) rotate(0.04)" text-anchor="middle" font-size="8.3" fill="#555">30</text>
<text transform="translate(793.45 477.1) rotate(0.04)" text-anchor="middle" font-size="8.3" fill="#555">40</text>
<text transform="translate(976.57 477.1) rotate(0.04)" text-anchor="middle" font-size="8.3" fill="#555">50</text>
<text transform="translate(1159.68 477.1) rotate(0.04)" text-anchor="middle" font-size="8.3" fill="#555">60</text>
<text transform="translate(1342.40 477.1) rotate(0.04)" text-anchor="middle" font-size="8.3" fill="#555">60+</text>
<rect x="748.8" y="188.3" width="26.4" height="8.4" fill="#dfe6e6" stroke="#1d9a9a" stroke-width="1.8"/>
<text transform="translate(779.4 195) rotate(0.04)" font-size="8.3" fill="#555" textLength="43.8" lengthAdjust="spacingAndGlyphs">Service level</text>
</svg></div><!--/chart-->
  <div id="tablewrap"><div class="abs" style="left:220.1px;top:483.4px;width:1131.8px;height:27.4px;background:#c1d9e0"></div>
<div class="t b" id="th0" style="left:230px;top:493px;font-size:9.2px;color:#1a1a1a;transform:translate(0.10px,0.79px) scaleX(0.9303) rotate(.04deg)">Waiting Time (Seconds)</div>
<div class="t b" id="th1" style="left:681px;top:493px;font-size:9.2px;color:#1a1a1a;transform:translate(0.60px,0.79px) scaleX(0.9370) rotate(.04deg)">Number Calls</div>
<div class="t b" id="th2" style="left:979px;top:493px;font-size:9.2px;color:#1a1a1a;transform:translate(0.90px,0.79px) scaleX(0.9880) rotate(.04deg)">Delta</div>
<div class="t b" id="th3" style="left:1156px;top:493px;font-size:9.2px;color:#1a1a1a;transform:translate(0.30px,0.79px) scaleX(0.9490) rotate(.04deg)">Percent</div>
<svg class="abs" style="left:662.0px;top:492.6px" width="6" height="9" viewBox="0 0 10 18"><path d="M5 0 L10 7.6 H0 Z" fill="#6f919b"/><path d="M5 18 L10 10.4 H0 Z" fill="#8aa9b3"/></svg>
<svg class="abs" style="left:960.0px;top:492.6px" width="6" height="9" viewBox="0 0 10 18"><path d="M5 0 L10 7.6 H0 Z" fill="#6f919b"/><path d="M5 18 L10 10.4 H0 Z" fill="#8aa9b3"/></svg>
<svg class="abs" style="left:1136.8px;top:492.6px" width="6" height="9" viewBox="0 0 10 18"><path d="M5 0 L10 7.6 H0 Z" fill="#6f919b"/><path d="M5 18 L10 10.4 H0 Z" fill="#8aa9b3"/></svg>
<div class="abs" style="left:220.1px;top:510.80px;width:1131.8px;height:27.59px;background:#ebebeb"></div>
<div class="abs" style="left:673.5px;top:510.80px;width:1px;height:27.59px;background:#f0f0f0"></div>
<div class="abs" style="left:971.5px;top:510.80px;width:1px;height:27.59px;background:#f0f0f0"></div>
<div class="abs" style="left:1148.5px;top:510.80px;width:1px;height:27.59px;background:#f0f0f0"></div>
<div class="t" id="td0_0" style="left:230px;top:521px;font-size:9.2px;color:#222;transform:translate(0.40px,0.29px) scaleX(1.0000) rotate(.04deg)">10</div>
<div class="t" id="td0_1" style="left:681px;top:521px;font-size:9.2px;color:#222;transform:translate(0.80px,0.29px) scaleX(1.0000) rotate(.04deg)">183</div>
<div class="t" id="td0_2" style="left:979px;top:521px;font-size:9.2px;color:#222;transform:translate(0.90px,0.29px) scaleX(1.0000) rotate(.04deg)">0</div>
<div class="t" id="td0_3" style="left:1156px;top:521px;font-size:9.2px;color:#222;transform:translate(0.30px,0.29px) scaleX(1.0000) rotate(.04deg)">8.70%</div>
<div class="abs" style="left:220.1px;top:538.39px;width:1131.8px;height:27.59px;background:#ffffff"></div>
<div class="abs" style="left:673.5px;top:538.39px;width:1px;height:27.59px;background:#fafafa"></div>
<div class="abs" style="left:971.5px;top:538.39px;width:1px;height:27.59px;background:#fafafa"></div>
<div class="abs" style="left:1148.5px;top:538.39px;width:1px;height:27.59px;background:#fafafa"></div>
<div class="t" id="td1_0" style="left:230px;top:548px;font-size:9.2px;color:#222;transform:translate(0.40px,0.89px) scaleX(1.0000) rotate(.04deg)">20</div>
<div class="t" id="td1_1" style="left:681px;top:548px;font-size:9.2px;color:#222;transform:translate(0.80px,0.89px) scaleX(1.0000) rotate(.04deg)">338</div>
<div class="t" id="td1_2" style="left:979px;top:548px;font-size:9.2px;color:#222;transform:translate(0.90px,0.89px) scaleX(1.0000) rotate(.04deg)">+ 155</div>
<div class="t" id="td1_3" style="left:1156px;top:548px;font-size:9.2px;color:#222;transform:translate(0.30px,0.89px) scaleX(1.0000) rotate(.04deg)">16.07%</div>
<div class="abs" style="left:220.1px;top:565.97px;width:1131.8px;height:27.59px;background:#ebebeb"></div>
<div class="abs" style="left:673.5px;top:565.97px;width:1px;height:27.59px;background:#f0f0f0"></div>
<div class="abs" style="left:971.5px;top:565.97px;width:1px;height:27.59px;background:#f0f0f0"></div>
<div class="abs" style="left:1148.5px;top:565.97px;width:1px;height:27.59px;background:#f0f0f0"></div>
<div class="t" id="td2_0" style="left:230px;top:576px;font-size:9.2px;color:#222;transform:translate(0.40px,0.49px) scaleX(1.0000) rotate(.04deg)">30</div>
<div class="t" id="td2_1" style="left:681px;top:576px;font-size:9.2px;color:#222;transform:translate(0.80px,0.49px) scaleX(1.0000) rotate(.04deg)">517</div>
<div class="t" id="td2_2" style="left:979px;top:576px;font-size:9.2px;color:#222;transform:translate(0.90px,0.49px) scaleX(1.0000) rotate(.04deg)">+ 179</div>
<div class="t" id="td2_3" style="left:1156px;top:576px;font-size:9.2px;color:#222;transform:translate(0.30px,0.49px) scaleX(1.0000) rotate(.04deg)">24.58%</div>
<div class="abs" style="left:220.1px;top:593.56px;width:1131.8px;height:27.59px;background:#ffffff"></div>
<div class="abs" style="left:673.5px;top:593.56px;width:1px;height:27.59px;background:#fafafa"></div>
<div class="abs" style="left:971.5px;top:593.56px;width:1px;height:27.59px;background:#fafafa"></div>
<div class="abs" style="left:1148.5px;top:593.56px;width:1px;height:27.59px;background:#fafafa"></div>
<div class="t" id="td3_0" style="left:230px;top:604px;font-size:9.2px;color:#222;transform:translate(0.40px,0.09px) scaleX(1.0000) rotate(.04deg)">40</div>
<div class="t" id="td3_1" style="left:681px;top:604px;font-size:9.2px;color:#222;transform:translate(0.80px,0.09px) scaleX(1.0000) rotate(.04deg)">699</div>
<div class="t" id="td3_2" style="left:979px;top:604px;font-size:9.2px;color:#222;transform:translate(0.90px,0.09px) scaleX(1.0000) rotate(.04deg)">+ 182</div>
<div class="t" id="td3_3" style="left:1156px;top:604px;font-size:9.2px;color:#222;transform:translate(0.30px,0.09px) scaleX(1.0000) rotate(.04deg)">33.24%</div>
<div class="abs" style="left:220.1px;top:621.14px;width:1131.8px;height:27.59px;background:#ebebeb"></div>
<div class="abs" style="left:673.5px;top:621.14px;width:1px;height:27.59px;background:#f0f0f0"></div>
<div class="abs" style="left:971.5px;top:621.14px;width:1px;height:27.59px;background:#f0f0f0"></div>
<div class="abs" style="left:1148.5px;top:621.14px;width:1px;height:27.59px;background:#f0f0f0"></div>
<div class="t" id="td4_0" style="left:230px;top:631px;font-size:9.2px;color:#222;transform:translate(0.40px,0.69px) scaleX(1.0000) rotate(.04deg)">50</div>
<div class="t" id="td4_1" style="left:681px;top:631px;font-size:9.2px;color:#222;transform:translate(0.80px,0.69px) scaleX(1.0000) rotate(.04deg)">859</div>
<div class="t" id="td4_2" style="left:979px;top:631px;font-size:9.2px;color:#222;transform:translate(0.90px,0.69px) scaleX(1.0000) rotate(.04deg)">+ 160</div>
<div class="t" id="td4_3" style="left:1156px;top:631px;font-size:9.2px;color:#222;transform:translate(0.30px,0.69px) scaleX(1.0000) rotate(.04deg)">40.85%</div>
<div class="abs" style="left:220.1px;top:648.73px;width:1131.8px;height:27.59px;background:#ffffff"></div>
<div class="abs" style="left:673.5px;top:648.73px;width:1px;height:27.59px;background:#fafafa"></div>
<div class="abs" style="left:971.5px;top:648.73px;width:1px;height:27.59px;background:#fafafa"></div>
<div class="abs" style="left:1148.5px;top:648.73px;width:1px;height:27.59px;background:#fafafa"></div>
<div class="t" id="td5_0" style="left:230px;top:659px;font-size:9.2px;color:#222;transform:translate(0.40px,0.29px) scaleX(1.0000) rotate(.04deg)">60</div>
<div class="t" id="td5_1" style="left:681px;top:659px;font-size:9.2px;color:#222;transform:translate(0.80px,0.29px) scaleX(1.0000) rotate(.04deg)">952</div>
<div class="t" id="td5_2" style="left:979px;top:659px;font-size:9.2px;color:#222;transform:translate(0.90px,0.29px) scaleX(1.0000) rotate(.04deg)">+ 93</div>
<div class="t" id="td5_3" style="left:1156px;top:659px;font-size:9.2px;color:#222;transform:translate(0.30px,0.29px) scaleX(1.0000) rotate(.04deg)">45.27%</div>
<div class="abs" style="left:220.1px;top:676.32px;width:1131.8px;height:27.59px;background:#ebebeb"></div>
<div class="abs" style="left:673.5px;top:676.32px;width:1px;height:27.59px;background:#f0f0f0"></div>
<div class="abs" style="left:971.5px;top:676.32px;width:1px;height:27.59px;background:#f0f0f0"></div>
<div class="abs" style="left:1148.5px;top:676.32px;width:1px;height:27.59px;background:#f0f0f0"></div>
<div class="t" id="td6_0" style="left:230px;top:686px;font-size:9.2px;color:#222;transform:translate(0.40px,0.89px) scaleX(1.0000) rotate(.04deg)">60+</div>
<div class="t" id="td6_1" style="left:681px;top:686px;font-size:9.2px;color:#222;transform:translate(0.80px,0.89px) scaleX(1.0000) rotate(.04deg)">2103</div>
<div class="t" id="td6_2" style="left:979px;top:686px;font-size:9.2px;color:#222;transform:translate(0.90px,0.89px) scaleX(1.0000) rotate(.04deg)">+ 1151</div>
<div class="t" id="td6_3" style="left:1156px;top:686px;font-size:9.2px;color:#222;transform:translate(0.30px,0.89px) scaleX(1.0000) rotate(.04deg)">100.00%</div></div><!--/table-->
</div>

</body>
</html>
